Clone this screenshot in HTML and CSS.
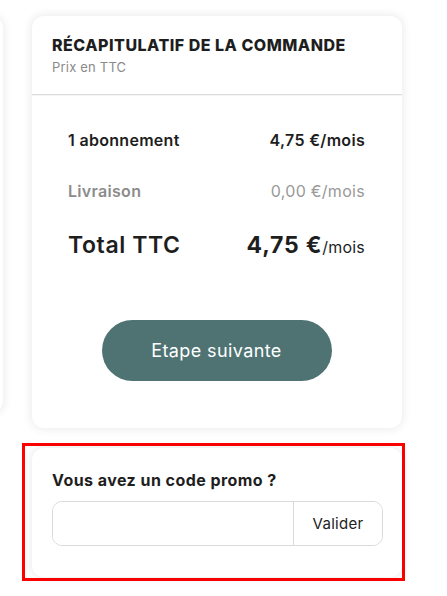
FILE: index.html
```html
<!DOCTYPE html>
<html lang="fr">
<head>
<meta charset="utf-8">
<title>Récapitulatif</title>
<link rel="stylesheet" href="styles.css">
</head>
<body>
<div class="page">
  <div class="prev-card"></div>
  <div class="column">
    <section class="card summary">
      <header class="summary-head">
        <h2 class="title">RÉCAPITULATIF DE LA COMMANDE</h2>
        <p class="subtitle">Prix en TTC</p>
      </header>
      <div class="summary-body">
        <div class="row row-main">
          <span>1 abonnement</span>
          <span>4,75 €/mois</span>
        </div>
        <div class="row row-muted">
          <span class="muted-label">Livraison</span>
          <span class="muted-value">0,00 €/mois</span>
        </div>
        <div class="row row-total">
          <span>Total TTC</span>
          <span class="total-value">4,75 €<small>/mois</small></span>
        </div>
        <div class="cta-wrap">
          <button class="cta">Etape suivante</button>
        </div>
      </div>
    </section>
    <div class="highlight">
      <section class="card promo">
        <h3 class="promo-title">Vous avez un code promo ?</h3>
        <div class="promo-group">
          <input class="promo-input" type="text" aria-label="Code promo">
          <button class="promo-btn">Valider</button>
        </div>
      </section>
    </div>
  </div>
</div>
</body>
</html>
```

FILE: styles.css
```css
* { box-sizing: border-box; }
html, body { margin: 0; padding: 0; background: #fff; }
body {
  font-family: Inter, "Noto Sans", "Liberation Sans", sans-serif;
  color: #222;
  width: 447px;
  height: 596px;
  overflow: hidden;
}
.page {
  display: flex;
  align-items: flex-start;
  gap: 29px;
}
.prev-card {
  width: 300px;
  margin-left: -297px;
  margin-top: 16px;
  height: 397px;
  background: #fff;
  border-radius: 12px;
  box-shadow: 0 0 8px 2px rgba(0,0,0,0.07);
}
.column {
  display: flex;
  flex-direction: column;
  margin-top: 16px;
}
.card {
  background: #fff;
  border-radius: 12px;
  box-shadow: 0 0 8px 2px rgba(0,0,0,0.07);
}
.summary { width: 370px; }
.summary-head {
  padding: 18px 20px 17px;
  border-bottom: 1px solid #dcdcdc;
  box-shadow: 0 1px 1px rgba(0,0,0,0.04);
}
.title {
  margin: 0;
  font-size: 16px;
  line-height: 22px;
  font-weight: 800;
  color: #1e1e1e;
  letter-spacing: 0.5px;
  white-space: nowrap;
}
.subtitle {
  margin: 1px 0 0;
  font-size: 13px;
  line-height: 20px;
  color: #8a8a8a;
  letter-spacing: 0.2px;
}
.summary-body {
  padding: 33px 37px 47px 36px;
}
.row {
  display: flex;
  justify-content: space-between;
  align-items: baseline;
}
.row-main {
  font-size: 16px;
  line-height: 24px;
  font-weight: 600;
  color: #1e1e1e;
  letter-spacing: 0.3px;
}
.row-muted {
  margin-top: 27px;
  font-size: 16px;
  line-height: 24px;
  letter-spacing: 0.3px;
}
.muted-label { color: #8c8c8c; font-weight: 600; }
.muted-value { color: #999; font-weight: 400; }
.row-total {
  margin-top: 26px;
  font-size: 23px;
  line-height: 32px;
  font-weight: 600;
  color: #1e1e1e;
  letter-spacing: 0.6px;
}
.total-value { font-weight: 700; letter-spacing: 0.8px; }
.total-value small {
  font-size: 16px;
  font-weight: 400;
  letter-spacing: 0.2px;
}
.cta-wrap {
  display: flex;
  justify-content: center;
  margin-top: 57px;
}
.cta {
  width: 230px;
  height: 61px;
  border: none;
  border-radius: 31px;
  background: #4e7372;
  color: #fff;
  font-family: inherit;
  font-size: 18px;
  font-weight: 400;
  letter-spacing: 0.4px;
  cursor: pointer;
}
.highlight {
  margin-top: 15px;
  margin-left: -10px;
  border: 3px solid #ff0000;
  padding: 2px 0 1px 7px;
  width: 383px;
}
.promo {
  width: 370px;
  padding: 21px 19px 31px 20px;
}
.promo-title {
  margin: 0;
  font-size: 16px;
  line-height: 22px;
  font-weight: 700;
  color: #1e1e1e;
  letter-spacing: 0.45px;
}
.promo-group {
  margin-top: 10px;
  display: flex;
  height: 45px;
  border: 1px solid #dadada;
  border-radius: 10px;
  overflow: hidden;
}
.promo-input {
  flex: 1;
  min-width: 0;
  border: none;
  outline: none;
  padding: 0 12px;
  font-family: inherit;
  font-size: 14px;
  background: #fff;
}
.promo-btn {
  width: 89px;
  border: none;
  border-left: 1px solid #dadada;
  background: #fff;
  font-family: inherit;
  font-size: 15px;
  letter-spacing: 0.3px;
  color: #222;
  cursor: pointer;
}
```
